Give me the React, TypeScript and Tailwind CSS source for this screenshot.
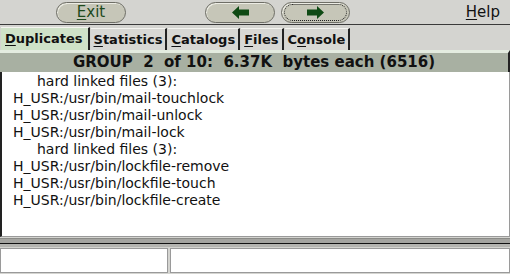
import React from 'react';

const font = { fontFamily: '"DejaVu Sans", "Liberation Sans", sans-serif' };

const PillButton: React.FC<{ children: React.ReactNode; dotted?: boolean; className?: string }> = ({ children, dotted, className }) => (
  <div
    className={`h-[21px] rounded-full border border-[#6e6e66] bg-[#c6c6b8] flex items-center justify-center shadow-[inset_1px_1px_0_#ecece4] ${className ?? ''}`}
  >
    <div className={`h-[17px] w-[calc(100%-4px)] rounded-full flex items-center justify-center ${dotted ? 'border border-dotted border-[#222]' : ''}`}>
      {children}
    </div>
  </div>
);

const Arrow: React.FC<{ dir: 'left' | 'right' }> = ({ dir }) => (
  <svg width="17" height="13" viewBox="0 0 17 13">
    {dir === 'left' ? (
      <path d="M0 6.5 L7 0 L7 3.5 L17 3.5 L17 9.5 L7 9.5 L7 13 Z" fill="#0f4a14" />
    ) : (
      <path d="M17 6.5 L10 0 L10 3.5 L0 3.5 L0 9.5 L10 9.5 L10 13 Z" fill="#0f4a14" />
    )}
  </svg>
);

const tabs = [
  { label: 'Duplicates', u: 0 },
  { label: 'Statistics', u: 0 },
  { label: 'Catalogs', u: 0 },
  { label: 'Files', u: 0 },
  { label: 'Console', u: 1 },
];

const lines = [
  { text: 'hard linked files (3):', indent: true },
  { text: 'H_USR:/usr/bin/mail-touchlock' },
  { text: 'H_USR:/usr/bin/mail-unlock' },
  { text: 'H_USR:/usr/bin/mail-lock' },
  { text: 'hard linked files (3):', indent: true },
  { text: 'H_USR:/usr/bin/lockfile-remove' },
  { text: 'H_USR:/usr/bin/lockfile-touch' },
  { text: 'H_USR:/usr/bin/lockfile-create' },
];

const Underlined: React.FC<{ text: string; at: number }> = ({ text, at }) => (
  <>
    {text.slice(0, at)}
    <span className="underline underline-offset-2">{text[at]}</span>
    {text.slice(at + 1)}
  </>
);

export default function App() {
  return (
    <div className="w-[510px] h-[274px] bg-[#d4d4d0] flex flex-col overflow-hidden" style={font}>
      {/* toolbar */}
      <div className="h-[25px] flex items-center border-b border-[#3a3a3a] bg-[#d4d4d0]">
        <PillButton className="ml-[56px] w-[70px]">
          <span className="text-[15px] text-[#1d4a1d] leading-none">
            <Underlined text="Exit" at={0} />
          </span>
        </PillButton>
        <PillButton className="ml-[79px] w-[70px]">
          <Arrow dir="left" />
        </PillButton>
        <PillButton dotted className="ml-[6px] w-[69px]">
          <Arrow dir="right" />
        </PillButton>
        <div className="ml-auto mr-[10px] text-[15px] text-[#111] leading-none">
          <Underlined text="Help" at={0} />
        </div>
      </div>

      {/* tabs */}
      <div className="h-[25px] flex items-end bg-[#d4d4d0] pl-[1px]">
        {tabs.map((t, i) => (
          <div
            key={t.label}
            className={`h-[22px] px-[3px] flex items-center text-[13px] font-bold text-[#111] border-r-2 border-[#222] border-t border-t-[#f4f4f0] ${
              i === 0 ? 'bg-[#cfe2c8] pl-[4px] pr-[5px] h-[23px]' : 'bg-[#d8d8d4] ml-[1px]'
            }`}
          >
            <Underlined text={t.label} at={t.u} />
          </div>
        ))}
      </div>

      {/* group header */}
      <div className="border-t-[3px] border-[#e4ece0] h-[22px] bg-[#a8b0a2] flex items-center justify-center text-[15px] font-bold text-[#111] border-r-2 border-r-[#222] whitespace-pre">
        {'GROUP  2  of 10:  6.37K  bytes each (6516)'}
      </div>

      {/* list */}
      <div className="h-[165px] bg-white border-l-2 border-[#222] border-r border-r-[#9a9a9a] border-b border-b-[#9a9a9a] pt-[1px]">
        {lines.map((l, i) => (
          <div
            key={i}
            className={`h-[17px] leading-[17px] text-[14px] text-[#111] whitespace-pre ${l.indent ? 'pl-[35px]' : 'pl-[11px]'}`}
          >
            {l.text}
          </div>
        ))}
      </div>

      {/* splitter */}
      <div className="mt-[1px] h-[9px] flex flex-col">
        <div className="h-[5px] bg-[#a4a4a0] border-t border-[#8a8a86]" />
        <div className="h-[1px] bg-[#111]" />
        <div className="h-[3px] bg-[#b4b4b0]" />
      </div>

      {/* status boxes */}
      <div className="flex-1 flex gap-[2px] pt-[1px] bg-[#d4d4d0]">
        <div className="w-[168px] h-[25px] bg-white border border-[#9a9a9a]" />
        <div className="flex-1 h-[25px] bg-white border border-[#9a9a9a]" />
      </div>
    </div>
  );
}
